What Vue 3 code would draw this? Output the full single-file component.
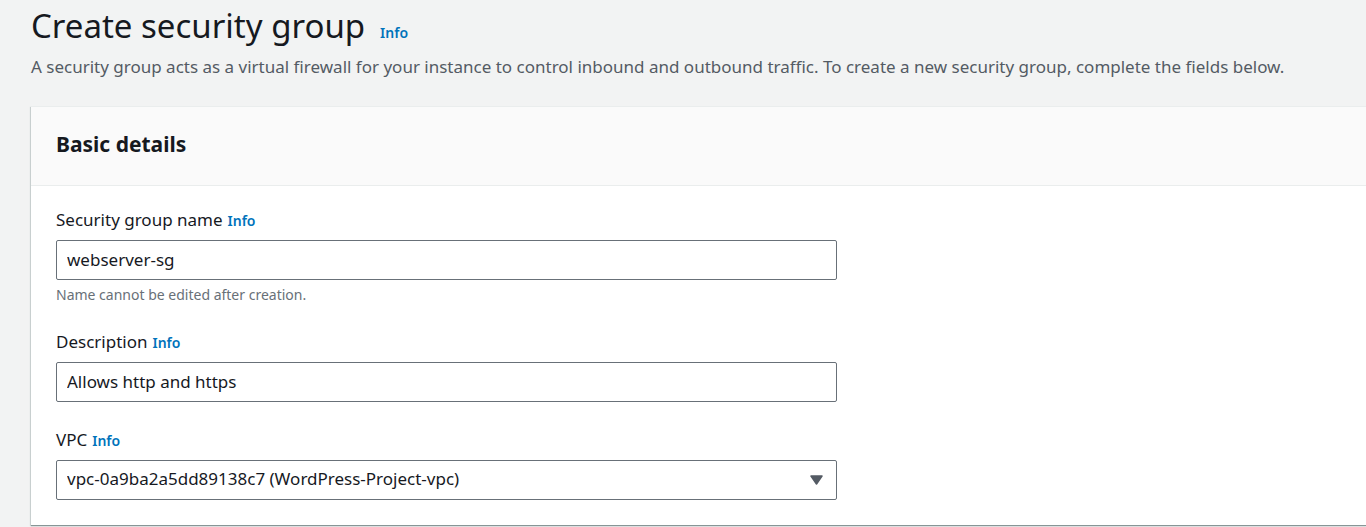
<script setup>
import { ref } from 'vue'

const name = ref('webserver-sg')
const description = ref('Allows http and https')
const vpc = ref('vpc-0a9ba2a5dd89138c7')
</script>

<template>
  <main class="page">
    <header class="page-header">
      <div class="title-row">
        <h1>Create security group</h1>
        <a class="info" href="#info">Info</a>
      </div>
      <p>A security group acts as a virtual firewall for your instance to control inbound and outbound traffic. To create a new security group, complete the fields below.</p>
    </header>

    <section class="panel">
      <div class="panel-header">
        <h2>Basic details</h2>
      </div>
      <form class="panel-body" @submit.prevent>
        <div class="field">
          <div class="label-row">
            <label for="sg-name">Security group name</label>
            <a class="info" href="#name-info">Info</a>
          </div>
          <input id="sg-name" v-model="name" class="control" type="text" aria-describedby="sg-name-hint">
          <p id="sg-name-hint" class="hint">Name cannot be edited after creation.</p>
        </div>

        <div class="field">
          <div class="label-row">
            <label for="sg-description">Description</label>
            <a class="info" href="#description-info">Info</a>
          </div>
          <input id="sg-description" v-model="description" class="control" type="text">
        </div>

        <div class="field">
          <div class="label-row">
            <label for="sg-vpc">VPC</label>
            <a class="info" href="#vpc-info">Info</a>
          </div>
          <div class="select-wrap">
            <select id="sg-vpc" v-model="vpc" class="control">
              <option value="vpc-0a9ba2a5dd89138c7">vpc-0a9ba2a5dd89138c7 (WordPress-Project-vpc)</option>
            </select>
            <svg class="caret" viewBox="0 0 13 10" width="13" height="10" aria-hidden="true">
              <path d="M1 1h11L6.500 9z" fill="#545b64" stroke="#545b64" stroke-width="1.500" stroke-linejoin="round" />
            </svg>
          </div>
        </div>
      </form>
    </section>
  </main>
</template>

<style>
body {
  background: #f2f3f3;
}
</style>

<style scoped>
.page {
  padding: 4px 0 2px 31px;
  overflow: hidden;
  color: #16191f;
  font-family: "Noto Sans", "Open Sans", sans-serif;
  font-size: 17px;
  line-height: 24px;
}

h1,
h2,
p {
  margin: 0;
}

.page-header {
  margin-bottom: 27px;
}

.title-row {
  display: flex;
  align-items: baseline;
  gap: 15px;
}

h1 {
  font-size: 33px;
  font-weight: 400;
  line-height: 44px;
}

.page-header p {
  margin-top: 7px;
  color: #545b64;
  white-space: nowrap;
}

.info {
  color: #0073bb;
  font-size: 14px;
  font-weight: 600;
  text-decoration: none;
}

.panel {
  background: #fff;
  border-top: 1px solid #eaeded;
  box-shadow: 0 1px 1px #879596, -1px 1px 1px #d5dbdb;
}

.panel-header {
  padding: 22px 25px 26px;
  background: #fafafa;
  border-bottom: 1px solid #eaeded;
}

h2 {
  font-size: 21px;
  font-weight: 700;
  line-height: 30px;
}

.panel-body {
  display: grid;
  gap: 26px;
  padding: 22px 25px 25px;
}

.field {
  width: 61%;
  max-width: 781px;
}

.label-row {
  display: flex;
  align-items: baseline;
  gap: 5px;
  margin-bottom: 7px;
}

.control {
  display: block;
  box-sizing: border-box;
  width: 100%;
  height: 40px;
  padding: 0 10px 2px;
  color: #16191f;
  background: #fff;
  border: 1px solid #687078;
  border-radius: 2px;
  font: inherit;
  appearance: none;
}

.hint {
  margin-top: 5px;
  color: #687078;
  font-size: 14px;
  line-height: 19px;
}

.select-wrap {
  position: relative;
}

.caret {
  position: absolute;
  top: 15px;
  right: 14px;
  pointer-events: none;
}
</style>
